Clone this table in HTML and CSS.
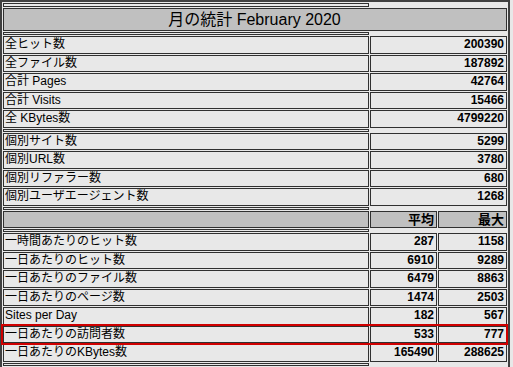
FILE: index.html
```html
<!DOCTYPE html>
<html lang="ja">
<head>
<meta charset="utf-8">
<title>月の統計 February 2020</title>
<link rel="stylesheet" href="styles.css">
</head>
<body>
<div class="wrap">
<table class="stats">
<colgroup><col class="c1"><col class="c2"><col class="c3"></colgroup>
<tr><th class="sep top"></th></tr>
<tr><th colspan="3" class="title">月の統計 February 2020</th></tr>
<tr><th class="sep"></th></tr>
<tr><td class="lbl">全ヒット数</td><td colspan="2" class="num">200390</td></tr>
<tr><td class="lbl">全ファイル数</td><td colspan="2" class="num">187892</td></tr>
<tr><td class="lbl">合計 Pages</td><td colspan="2" class="num">42764</td></tr>
<tr><td class="lbl">合計 Visits</td><td colspan="2" class="num">15466</td></tr>
<tr><td class="lbl">全 KBytes数</td><td colspan="2" class="num">4799220</td></tr>
<tr><th class="sep"></th></tr>
<tr><td class="lbl">個別サイト数</td><td colspan="2" class="num">5299</td></tr>
<tr><td class="lbl">個別URL数</td><td colspan="2" class="num">3780</td></tr>
<tr><td class="lbl">個別リファラー数</td><td colspan="2" class="num">680</td></tr>
<tr><td class="lbl">個別ユーザエージェント数</td><td colspan="2" class="num">1268</td></tr>
<tr><th class="sep"></th></tr>
<tr><th class="hdr"></th><th class="hdr num">平均</th><th class="hdr num">最大</th></tr>
<tr><th class="sep"></th></tr>
<tr><td class="lbl">一時間あたりのヒット数</td><td class="num">287</td><td class="num">1158</td></tr>
<tr><td class="lbl">一日あたりのヒット数</td><td class="num">6910</td><td class="num">9289</td></tr>
<tr><td class="lbl">一日あたりのファイル数</td><td class="num">6479</td><td class="num">8863</td></tr>
<tr><td class="lbl">一日あたりのページ数</td><td class="num">1474</td><td class="num">2503</td></tr>
<tr><td class="lbl">Sites per Day</td><td class="num">182</td><td class="num">567</td></tr>
<tr><td class="lbl">一日あたりの訪問者数</td><td class="num">533</td><td class="num">777</td></tr>
<tr><td class="lbl">一日あたりのKBytes数</td><td class="num">165490</td><td class="num">288625</td></tr>
<tr><th class="sep"></th></tr>
</table>
<div class="mark"></div>
</div>
</body>
</html>
```
FILE: styles.css
```css
html, body {
  margin: 0;
  padding: 0;
  background: #e8e8e8;
}
body {
  font-family: "Liberation Sans", "Noto Sans CJK JP", sans-serif;
  color: #000;
}
.wrap {
  position: relative;
  width: 513px;
}
.stats {
  width: 510px;
  table-layout: fixed;
  border-collapse: separate;
  border-spacing: 1px;
  border: 2px solid #404040;
}
.c1 { width: 366px; }
.c2 { width: 67px; }
.c3 { width: 69px; }
.stats td, .stats th {
  border: 1px solid #303030;
  padding: 0 2px 0 1px;
  font-size: 12px;
  line-height: 15px;
  height: 17.5px;
  box-sizing: border-box;
  white-space: nowrap;
  overflow: hidden;
}
.lbl {
  text-align: left;
  font-weight: normal;
}
.num {
  text-align: right;
  font-weight: bold;
}
.stats th.sep {
  height: 3px;
  padding: 0;
  line-height: 0;
  font-size: 0;
}
.stats th.sep.top {
  height: 4px;
}
.stats th.title {
  background: #c0c0c0;
  font-size: 16px;
  font-weight: normal;
  line-height: 21px;
  height: 23px;
  text-align: center;
}
.stats th.hdr {
  background: #c0c0c0;
  font-size: 13px;
  line-height: 15px;
}
.mark {
  position: absolute;
  left: 1px;
  top: 324px;
  width: 503px;
  height: 17px;
  border: 2px solid #d00000;
  pointer-events: none;
}
```
